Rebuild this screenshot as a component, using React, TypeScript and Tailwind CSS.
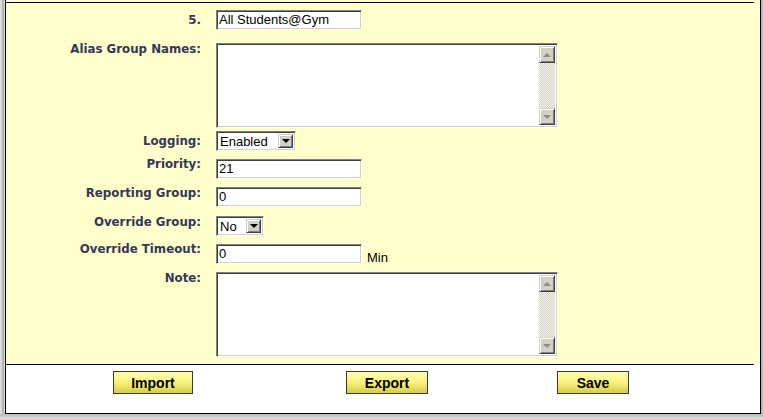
const label = "font-['DejaVu_Sans',Verdana,sans-serif] font-bold text-[11.8px] leading-[13px] text-[#36365a] text-right w-[195px] shrink-0";
const arial = "font-['Liberation_Sans',Arial,sans-serif] text-[13px] text-black";
const inset =
  "bg-white border border-t-[#808080] border-l-[#808080] border-b-white border-r-white shadow-[inset_1px_1px_0_#404040,inset_-1px_-1px_0_#d4d0c8]";
const raised =
  "bg-[#d4d0c8] border border-t-[#d4d0c8] border-l-[#d4d0c8] border-b-[#404040] border-r-[#404040] shadow-[inset_1px_1px_0_#ffffff,inset_-1px_-1px_0_#808080]";

function TextBox({ value = "" }: { value?: string }) {
  return (
    <div className={`${inset} w-[146px] h-[20px] pl-[2px] ${arial} leading-[18px]`}>{value}</div>
  );
}

function Select({ value, width }: { value: string; width: string }) {
  return (
    <div className={`${inset} ${width} h-[20px] flex p-[2px]`}>
      <span className={`flex-1 pl-[1px] ${arial} leading-[16px]`}>{value}</span>
      <span className={`${raised} w-[15px] h-full flex items-center justify-center`}>
        <span className="w-0 h-0 border-x-[4px] border-x-transparent border-t-[4px] border-t-black" />
      </span>
    </div>
  );
}

function TextArea() {
  return (
    <div className={`${inset} w-[342px] h-[85px] flex justify-end p-[2px]`}>
      <div className="w-[16px] h-full flex flex-col">
        <div className={`${raised} h-[17px] flex items-center justify-center`}>
          <span className="w-0 h-0 border-x-[4px] border-x-transparent border-b-[4px] border-b-[#8a8a8a]" />
        </div>
        <div className="flex-1 bg-[repeating-conic-gradient(#d4d0c8_0%_25%,#f4f3f0_0%_50%)] bg-[length:2px_2px]" />
        <div className={`${raised} h-[17px] flex items-center justify-center`}>
          <span className="w-0 h-0 border-x-[4px] border-x-transparent border-t-[4px] border-t-[#8a8a8a]" />
        </div>
      </div>
    </div>
  );
}

function YButton({ text, className }: { text: string; className: string }) {
  return (
    <button
      className={`${className} block shrink-0 h-[23px] border border-[#3a3a3a] bg-[linear-gradient(to_bottom,#ffffb0,#f7f17c_50%,#d8ca4c)] font-['Liberation_Sans',Arial,sans-serif] font-bold text-[14px] text-black leading-none`}
    >
      {text}
    </button>
  );
}

export default function App() {
  return (
    <div className="w-[764px] h-[419px] flex flex-col overflow-hidden bg-[#dcdcdc]">
      <div className="flex h-[414px]">
        <div className="w-[5px] bg-[linear-gradient(to_right,#e2e2e2,#d0d0d0_40%,#a0a0a0_60%,#c6c6c6_80%,#ececec)]" />
        <div className="w-[756px] border-x border-b border-black flex flex-col bg-white">
          <div className="bg-[#ffffcc] pt-[2px] pb-[7px]">
            <div className="w-[748px] h-px bg-black" />

            <div className="flex items-start mt-[7px]">
              <div className={`${label} pt-[4px]`}>5.</div>
              <div className="ml-[15px]">
                <TextBox value="All Students@Gym" />
              </div>
            </div>

            <div className="flex items-start mt-[13px]">
              <div className={`${label} pt-[0px]`}>Alias Group Names:</div>
              <div className="ml-[15px]">
                <TextArea />
              </div>
            </div>

            <div className="flex items-start mt-[3px]">
              <div className={`${label} pt-[4px]`}>Logging:</div>
              <div className="ml-[15px]">
                <Select value="Enabled" width="w-[80px]" />
              </div>
            </div>

            <div className="flex items-start mt-[8px]">
              <div className={`${label} -mt-[1px]`}>Priority:</div>
              <div className="ml-[15px]">
                <TextBox value="21" />
              </div>
            </div>

            <div className="flex items-start mt-[8px]">
              <div className={`${label} pt-[0px]`}>Reporting Group:</div>
              <div className="ml-[15px]">
                <TextBox value="0" />
              </div>
            </div>

            <div className="flex items-start mt-[9px]">
              <div className={`${label} pt-[0px]`}>Override Group:</div>
              <div className="ml-[15px]">
                <Select value="No" width="w-[48px]" />
              </div>
            </div>

            <div className="flex items-start mt-[8px]">
              <div className={`${label} -mt-[1px]`}>Override Timeout:</div>
              <div className="ml-[15px] flex items-start h-[20px]">
                <TextBox value="0" />
                <span className={`ml-[5px] pt-[7px] ${arial} leading-[13px] text-[#2c2c44]`}>Min</span>
              </div>
            </div>

            <div className="flex items-start mt-[8px]">
              <div className={`${label} pt-[0px]`}>Note:</div>
              <div className="ml-[15px]">
                <TextArea />
              </div>
            </div>
          </div>
          <div className="w-[748px] h-px bg-black" />
          <div className="flex items-start pt-[6px]">
            <YButton text="Import" className="ml-[107px] w-[80px]" />
            <YButton text="Export" className="ml-[153px] w-[82px]" />
            <YButton text="Save" className="ml-[129px] w-[72px]" />
          </div>
        </div>
        <div className="w-[3px] bg-[linear-gradient(to_right,#a8a8a8,#d8d8d8)]" />
      </div>
      <div className="h-[5px] bg-[linear-gradient(to_bottom,#b8b8b8,#e4e4e4)]" />
    </div>
  );
}
